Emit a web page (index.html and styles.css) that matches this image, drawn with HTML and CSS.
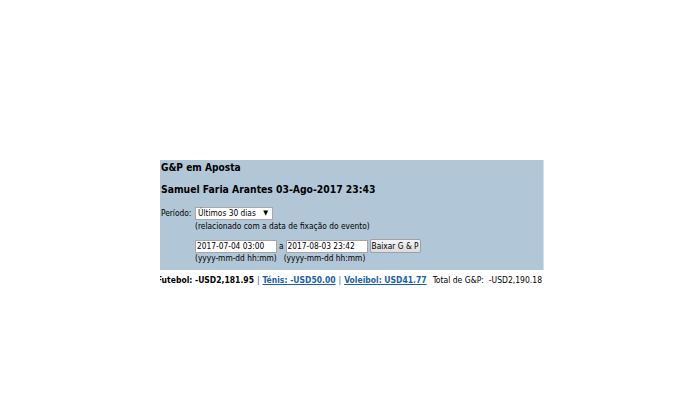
FILE: index.html
```html
<!DOCTYPE html>
<html lang="pt">
<head>
<meta charset="utf-8">
<title>G&amp;P em Aposta</title>
<link rel="stylesheet" href="styles.css">
</head>
<body>
<div class="wrap">
  <div class="panel">
    <div class="title">G&amp;P em Aposta</div>
    <div class="name">Samuel Faria Arantes 03-Ago-2017 23:43</div>
    <div class="form">
      <div class="label">Período:</div>
      <div class="field">
        <div class="select"><span>Últimos 30 dias</span><span class="arrow">▼</span></div>
      </div>
      <div></div>
      <div class="note">(relacionado com a data de fixação do evento)</div>
      <div></div>
      <div class="dates">
        <input class="date" type="text" value="2017-07-04 03:00">
        <span class="sep">a</span>
        <input class="date" type="text" value="2017-08-03 23:42">
        <button class="btn" type="button">Baixar G &amp; P</button>
      </div>
      <div></div>
      <div class="hints">
        <span>(yyyy-mm-dd hh:mm)</span>
        <span>(yyyy-mm-dd hh:mm)</span>
      </div>
    </div>
  </div>
  <div class="footer">
    <div class="sums">
      <b>Futebol: -USD2,181.95</b><span class="bar">|</span><a href="#">Ténis: -USD50.00</a><span class="bar">|</span><a href="#">Voleibol: USD41.77</a><span class="total">Total de G&amp;P:</span><span class="totval">-USD2,190.18</span>
    </div>
  </div>
</div>
</body>
</html>
```

FILE: styles.css
```css
html, body {
  margin: 0;
  padding: 0;
  background: #ffffff;
}

body {
  font-family: "DejaVu Sans Condensed", "DejaVu Sans", sans-serif;
  font-size: 8.3px;
  color: #000000;
}

.wrap {
  padding: 160px 0 0 160px;
  width: 384px;
}

.panel {
  background: #b1c6d6;
  border-right: 1px solid #cfe0ee;
  height: 110px;
  box-sizing: border-box;
  padding: 2px 1px 0 1px;
}

.title {
  font-weight: bold;
  font-size: 10.1px;
  line-height: 12px;
}

.name {
  font-weight: bold;
  font-size: 10.3px;
  line-height: 12px;
  margin-top: 9px;
}

.form {
  display: grid;
  grid-template-columns: 34px auto;
  margin-top: 11px;
  align-items: center;
}

.label {
  line-height: 14px;
}

.select {
  display: flex;
  justify-content: space-between;
  align-items: center;
  width: 78px;
  height: 13px;
  box-sizing: border-box;
  background: #ffffff;
  border: 1px solid #a8a8a8;
  padding: 0 4px 0 2px;
  line-height: 11px;
}

.arrow {
  font-size: 7px;
}

.note {
  line-height: 11px;
  margin-top: 1px;
}

.dates {
  display: flex;
  align-items: center;
  margin-top: 7px;
}

.date {
  width: 82px;
  height: 13px;
  box-sizing: border-box;
  border: 1px solid #a5a5a5;
  background: #ffffff;
  padding: 0 1px;
  margin: 0;
  font: inherit;
  font-size: 8.3px;
  color: #000000;
}

.sep {
  padding: 0 2px 0 2px;
}

.btn {
  margin: 0 0 0 2px;
  height: 14px;
  width: 51px;
  padding: 0;
  font: inherit;
  font-size: 8.3px;
  color: #000000;
  border: 1px solid #a0a0a0;
  border-radius: 2px;
  background: linear-gradient(#f4f4f4, #dcdcdc);
}

.hints {
  display: flex;
  gap: 7px;
  line-height: 11px;
}

.footer {
  width: 384px;
  overflow: hidden;
  margin-top: 5px;
}

.sums {
  display: flex;
  justify-content: flex-end;
  white-space: nowrap;
  line-height: 11px;
  padding-right: 2px;
  font-size: 8.5px;
}

.sums b {
  font-weight: bold;
}

.sums a {
  color: #1b5fa6;
  font-weight: bold;
  text-decoration: underline;
}

.bar {
  color: #1b5fa6;
  padding: 0 3px;
}

.total {
  padding-left: 6px;
}

.totval {
  padding-left: 5px;
}
```
